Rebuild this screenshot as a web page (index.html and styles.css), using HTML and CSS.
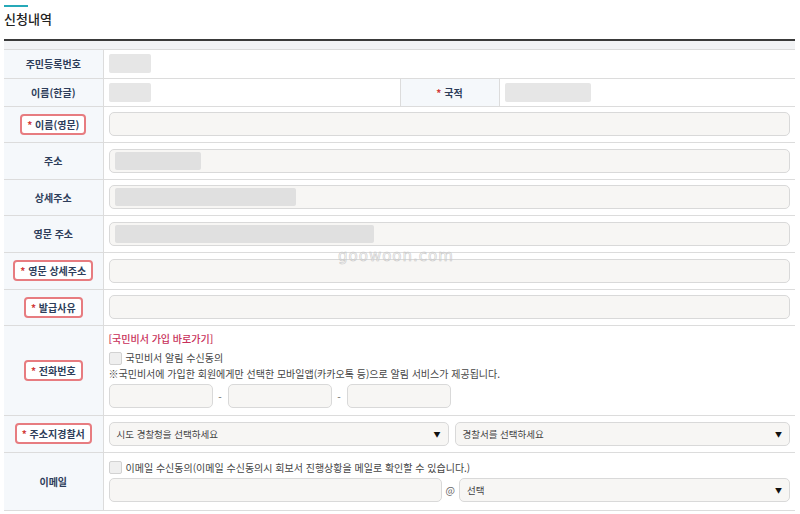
FILE: index.html
```html
<!DOCTYPE html>
<html lang="ko">
<head>
    <meta charset="UTF-8">
    <title>신청내역</title>
    <link rel="stylesheet" href="styles.css">
</head>
<body>
    <div class="wrap">
        <div class="title-bar"></div>
        <h2 class="title">신청내역</h2>
        <div class="head-band"></div>
        <table class="form">
            <tr class="r-short">
                <th>주민등록번호</th>
                <td colspan="3"><span class="blur" style="width:42px"></span></td>
            </tr>
            <tr class="r-short">
                <th>이름(한글)</th>
                <td class="half"><span class="blur" style="width:42px"></span></td>
                <th class="sub"><span class="star">*</span> 국적</th>
                <td><span class="blur" style="width:86px"></span></td>
            </tr>
            <tr>
                <th><span class="req"><span class="star">*</span> 이름(영문)</span></th>
                <td colspan="3"><div class="input"></div></td>
            </tr>
            <tr class="r-tall">
                <th>주소</th>
                <td colspan="3"><div class="input"><span class="blur in" style="width:86px"></span></div></td>
            </tr>
            <tr>
                <th>상세주소</th>
                <td colspan="3"><div class="input"><span class="blur in" style="width:181px"></span></div></td>
            </tr>
            <tr class="r-tall">
                <th>영문 주소</th>
                <td colspan="3"><div class="input"><span class="blur in" style="width:259px"></span></div></td>
            </tr>
            <tr class="r-tall">
                <th><span class="req"><span class="star">*</span> 영문 상세주소</span></th>
                <td colspan="3"><div class="input"></div></td>
            </tr>
            <tr>
                <th><span class="req"><span class="star">*</span> 발급사유</span></th>
                <td colspan="3"><div class="input"></div></td>
            </tr>
            <tr class="r-phone">
                <th><span class="req"><span class="star">*</span> 전화번호</span></th>
                <td colspan="3">
                    <div class="link">[국민비서 가입 바로가기]</div>
                    <label class="check"><span class="box"></span>국민비서 알림 수신동의</label>
                    <div class="note">※국민비서에 가입한 회원에게만 선택한 모바일앱(카카오톡 등)으로 알림 서비스가 제공됩니다.</div>
                    <div class="phone">
                        <div class="input"></div><span class="dash">-</span>
                        <div class="input"></div><span class="dash">-</span>
                        <div class="input"></div>
                    </div>
                </td>
            </tr>
            <tr class="r-tall">
                <th><span class="req"><span class="star">*</span> 주소지경찰서</span></th>
                <td colspan="3">
                    <div class="pair">
                        <div class="input select sel1"><span>시도 경찰청을 선택하세요</span><span class="arrow">▼</span></div>
                        <div class="input select grow"><span>경찰서를 선택하세요</span><span class="arrow">▼</span></div>
                    </div>
                </td>
            </tr>
            <tr class="r-mail">
                <th>이메일</th>
                <td colspan="3">
                    <label class="check"><span class="box"></span>이메일 수신동의(이메일 수신동의시 회보서 진행상황을 메일로 확인할 수 있습니다.)</label>
                    <div class="pair">
                        <div class="input mail"></div>
                        <span class="at">@</span>
                        <div class="input select grow"><span>선택</span><span class="arrow">▼</span></div>
                    </div>
                </td>
            </tr>
        </table>
        <div class="mark">goowoon.com</div>
    </div>
</body>
</html>
```

FILE: styles.css
```css
* {
    margin: 0;
    padding: 0;
    box-sizing: border-box;
}

body {
    font-family: "Noto Sans CJK KR", "Noto Sans", sans-serif;
    color: #333;
    background: #fff;
}

.wrap {
    position: relative;
    width: 795px;
    padding-left: 4px;
}

.title-bar {
    width: 24px;
    height: 2px;
    margin-top: 5px;
    background: #26a9b8;
}

.title {
    font-size: 13px;
    font-weight: 500;
    color: #222;
    line-height: 20px;
    margin-top: 2px;
    height: 30px;
}

.head-band {
    height: 11px;
    border-top: 2px solid #3a3a3a;
    border-bottom: 1px solid #dcdcdc;
    background: #f2f3f5;
}

.form {
    width: 100%;
    border-collapse: collapse;
    font-size: 10px;
}

.form tr {
    height: 36px;
    border-bottom: 1px solid #dcdcdc;
}

.form tr.r-tall {
    height: 37px;
}

.form tr.r-short {
    height: 28px;
}

.form tr.r-phone {
    height: 90px;
}

.form tr.r-mail {
    height: 58px;
}

.form th {
    width: 99px;
    background: #f5f8fb;
    border-right: 1px solid #dcdcdc;
    color: #2d3d5a;
    font-weight: 700;
    font-size: 10px;
    text-align: center;
    vertical-align: middle;
}

.form th.sub {
    width: 99px;
    border-left: 1px solid #dcdcdc;
}

.form td {
    padding: 0 5px 0 5px;
    vertical-align: middle;
}

.form td.half {
    width: 297px;
}

.star {
    color: #d23a3a;
}

.req {
    display: inline-block;
    padding: 1px 5px;
    border: 2px solid #e77c80;
    border-radius: 4px;
    background: #fff;
}

.blur {
    display: block;
    height: 19px;
    background: #e6e6e6;
    border-radius: 2px;
    filter: blur(0.6px);
}

.blur.in {
    height: 18px;
    background: #e0e0e0;
}

.input {
    height: 24px;
    border: 1px solid #d9d9d9;
    border-radius: 5px;
    background: #f7f6f4;
    padding: 2px 5px;
}

.link {
    color: #c8305a;
    font-weight: 500;
    line-height: 14px;
    margin-bottom: 5px;
}

.check {
    display: flex;
    align-items: center;
    color: #444;
    line-height: 14px;
}

.box {
    width: 13px;
    height: 13px;
    margin-right: 4px;
    border: 1px solid #d2d2d2;
    border-radius: 2px;
    background: #efefef;
}

.note {
    color: #444;
    line-height: 14px;
    margin: 2px 0 3px;
}

.phone {
    display: flex;
    align-items: center;
}

.phone .input {
    width: 104px;
}

.dash {
    width: 15px;
    text-align: center;
    color: #666;
}

.pair {
    display: flex;
    align-items: center;
    gap: 6px;
}

.select {
    display: flex;
    justify-content: space-between;
    align-items: center;
    color: #444;
    font-size: 9.5px;
    padding: 0 7px;
}

.sel1 {
    width: 340px;
}

.grow {
    flex: 1;
}

.arrow {
    font-size: 7px;
    color: #111;
}

.r-mail .check {
    margin-bottom: 3px;
}

.mail {
    width: 333px;
}

.at {
    color: #666;
    font-size: 10px;
    margin: 0 -2px;
}

.mark {
    position: absolute;
    left: 338px;
    top: 242px;
    font-family: "DejaVu Sans", sans-serif;
    font-size: 15px;
    letter-spacing: 1px;
    color: transparent;
    -webkit-text-stroke: 0.6px #c9c9c9;
}
```
